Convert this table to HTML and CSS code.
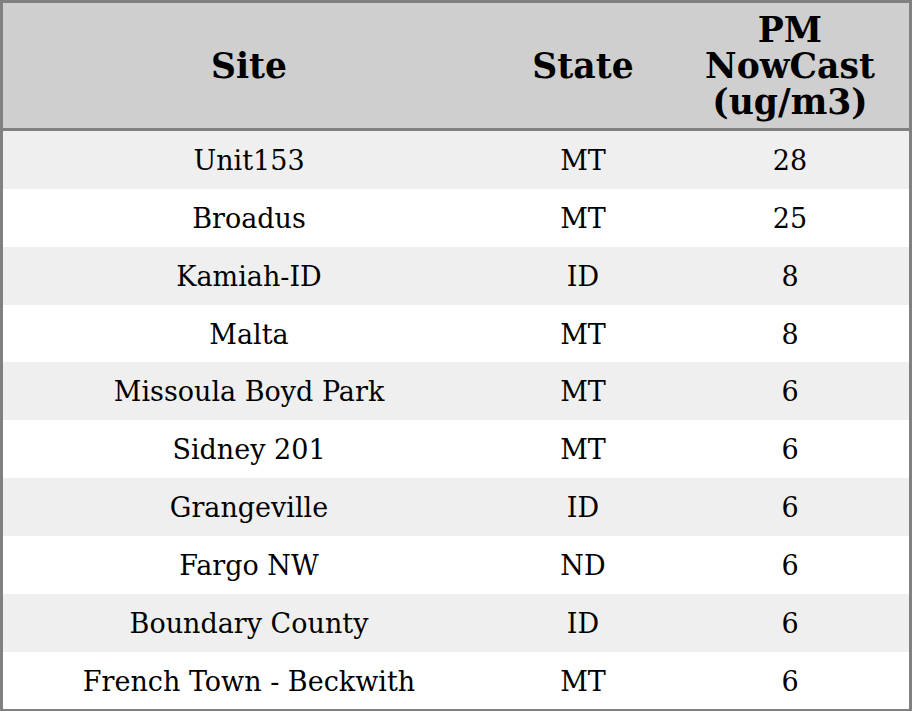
FILE: index.html
```html
<!DOCTYPE html>
<html>
<head>
<meta charset="utf-8">
<link rel="stylesheet" href="styles.css">
</head>
<body>
<div class="frame">
<table class="sites">
<colgroup><col class="c-site"><col class="c-state"><col class="c-pm"></colgroup>
<thead>
<tr><th>Site</th><th>State</th><th>PM<br>NowCast<br>(ug/m3)</th></tr>
</thead>
<tbody>
<tr><td>Unit153</td><td>MT</td><td>28</td></tr>
<tr><td>Broadus</td><td>MT</td><td>25</td></tr>
<tr><td>Kamiah-ID</td><td>ID</td><td>8</td></tr>
<tr><td>Malta</td><td>MT</td><td>8</td></tr>
<tr><td>Missoula Boyd Park</td><td>MT</td><td>6</td></tr>
<tr><td>Sidney 201</td><td>MT</td><td>6</td></tr>
<tr><td>Grangeville</td><td>ID</td><td>6</td></tr>
<tr><td>Fargo NW</td><td>ND</td><td>6</td></tr>
<tr><td>Boundary County</td><td>ID</td><td>6</td></tr>
<tr><td>French Town - Beckwith</td><td>MT</td><td>6</td></tr>
</tbody>
</table>
</div>
</body>
</html>
```
FILE: styles.css
```css
html, body { margin: 0; padding: 0; background: #fff; }
.frame {
  width: 906px;
  border: 3px solid #808080;
  overflow: hidden;
}
.sites {
  width: 906px;
  border-collapse: collapse;
  table-layout: fixed;
  font-family: "DejaVu Serif", serif;
  color: #000;
}
.c-site { width: 492px; }
.c-state { width: 176px; }
.c-pm { width: 238px; }
.sites th {
  background: #cfcfcf;
  font-size: 34.6px;
  font-weight: bold;
  line-height: 36px;
  padding: 8.5px 0;
  text-align: center;
  border-bottom: 3px solid #808080;
}
.sites td {
  font-size: 27px;
  line-height: 27.85px;
  padding: 16px 0 14px;
  text-align: center;
}
.sites tbody tr:nth-child(odd) td { background: #efefef; }
```
